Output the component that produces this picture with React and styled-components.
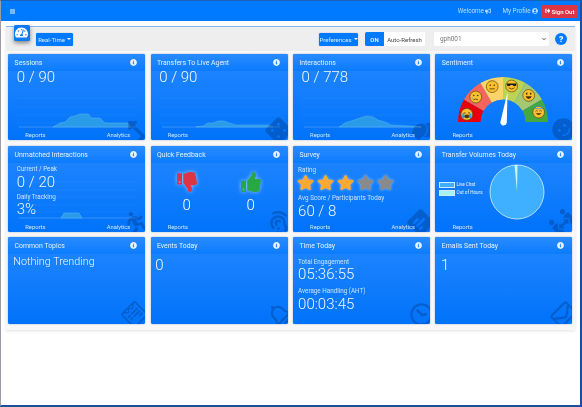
import React from 'react';
import styled, { createGlobalStyle } from 'styled-components';
import {
  FaBullhorn, FaUserCircle, FaSignOutAlt, FaTachometerAlt, FaInfoCircle, FaQuestion,
  FaThumbsDown, FaThumbsUp, FaStar, FaLevelUpAlt, FaDiceFour, FaComments, FaSmile, FaRunning,
  FaAssistiveListeningSystems, FaPollH, FaPeopleArrows, FaWpforms, FaRegBell, FaRegClock, FaRegEnvelope, FaChevronDown,
} from 'react-icons/fa';

const Global = createGlobalStyle`
  html, body { margin: 0; padding: 0; background: #fff; }
  body { font-family: Roboto, "Liberation Sans", sans-serif; }
  * { box-sizing: border-box; }
`;

const Frame = styled.div`
  width: 582px; height: 407px; overflow: hidden; background: #fff; filter: blur(.3px);
  border-top: 1px solid #1c5fb8; border-left: 1px solid #9c9ca4;
  border-right: 2px solid #1b4f9c; border-bottom: 2px solid #1b4f9c;
`;
const Nav = styled.div`
  height: 20px; background: #007bff; display: flex; align-items: center;
  padding: 0 2px 0 8.5px; color: rgba(255,255,255,.72); font-size: 6.3px;
`;
const MenuDot = styled.i`display: block; width: 5px; height: 5px; background: #7ab8ff;`;
const NavSpacer = styled.div`flex: 1;`;
const NavItem = styled.span`
  display: flex; align-items: center; gap: 1.5px; margin-right: ${p => p.$mr}px; white-space: nowrap;
  svg { width: 6px; height: 6px; }
`;
const SignOut = styled.button`
  width: 37px; height: 13px; padding: 0; border: 0; border-radius: 1.5px; background: #dc3545; color: #fff;
  font: 500 6px Roboto, sans-serif; display: flex; align-items: center; justify-content: center; gap: 1.5px;
  svg { width: 5.5px; height: 5.5px; }
`;
const Panel = styled.div`
  position: relative; width: 569px; height: 304px; margin: 5px 0 0 5px; background: #f8f8f8;
  border-top: 1px solid #7fb9f0; box-shadow: 0 1px 3px rgba(0,0,0,.12);
`;
const Toolbar = styled.div`
  height: 24px; background: #eeeeee; display: flex; align-items: center; padding: 0 8px 0 30px;
`;
const Logo = styled.div`
  position: absolute; left: 7.5px; top: -2px; width: 16.5px; height: 15.5px; background: #0b7bf5; border-radius: 1.5px;
  box-shadow: 0 2px 4px rgba(0,0,0,.45); display: flex; align-items: center; justify-content: center; color: #fff;
  svg { width: 13px; height: 13px; }
`;
const Drop = styled.button`
  height: 13px; width: ${p => p.$w}px; padding: 0; border: 0; border-radius: 1.5px; background: #007bff;
  color: rgba(255,255,255,.85); font: 400 6px Roboto, sans-serif; margin-right: ${p => p.$mr || 0}px;
  display: flex; align-items: center; justify-content: center; gap: 2px; box-shadow: 0 0 1px rgba(0,60,160,.6);
  &::after { content: ''; border-top: 2px solid #fff; border-left: 2px solid transparent; border-right: 2px solid transparent; }
`;
const Grow = styled.div`flex: 1;`;
const Toggle = styled.div`
  display: flex; height: 14px; width: 60px; background: #fff; margin-right: 9px; font-size: 6px;
`;
const ToggleOn = styled.span`
  width: 19px; background: #007bff; color: #fff; font-weight: 500; display: flex; align-items: center; justify-content: center; border-radius: 1.5px 0 0 1.5px;
`;
const ToggleOff = styled.span`
  flex: 1; color: #444; display: flex; align-items: center; justify-content: center;
`;
const Select = styled.div`
  width: 115px; height: 14px; background: #fff; border-radius: 2px; color: #777; font-size: 6.4px;
  display: flex; align-items: center; justify-content: space-between; padding: 0 3px 0 6px; margin-right: 6px;
  svg { width: 4px; height: 4px; color: #444; }
`;
const Help = styled.div`
  width: 12px; height: 12px; border-radius: 50%; background: #007bff; color: #fff; display: flex; align-items: center; justify-content: center;
  svg { width: 6px; height: 6px; }
`;
const Grid = styled.div`
  display: grid; grid-template-columns: repeat(4, 137px); grid-auto-rows: 86.3px; gap: 5.6px 5.4px;
  margin: 2.7px 0 0 2.3px;
`;
const CardBox = styled.div`
  position: relative; overflow: hidden; border-radius: 1.5px; color: #fff; display: flex; flex-direction: column;
  background: linear-gradient(#2487ff, #0073fa); box-shadow: 0 0 1.5px rgba(0,60,140,.5);
`;
const Head = styled.div`
  height: 17px; flex: none; display: flex; align-items: center; justify-content: space-between; padding: 1px 8px 0 6.3px;
  background: linear-gradient(#2a8bff, #0b7cff); font-size: 6.9px; color: rgba(255,255,255,.88);
  svg { width: 7px; height: 7px; color: #e8f2ff; margin-top: -1px; }
`;
const Body = styled.div`
  flex: 1; min-height: 0; position: relative; display: flex; flex-direction: column; padding: 0 0 0 ${p => p.$pl ?? 8.5}px;
`;
const Big = styled.div`
  font-size: ${p => p.$size || 15}px; font-weight: 300; line-height: ${p => p.$lh || 14}px; margin-top: ${p => p.$mt ?? -1}px;
  margin-left: ${p => p.$ml || 0}px; white-space: nowrap; color: rgba(255,255,255,.94);
`;
const Label = styled.div`
  font-size: 6.3px; line-height: 8px; margin-top: ${p => p.$mt ?? 0}px; color: rgba(255,255,255,.78); white-space: nowrap;
`;
const Chart = styled.svg`
  position: absolute; left: 0; top: ${p => p.$top}px; width: 137px; height: ${p => p.$h}px; display: block;
`;
const Footer = styled.div`
  position: absolute; left: 0; right: 0; bottom: 0; height: 9px; display: flex; align-items: center; justify-content: space-between;
  padding: 0 15px 0 17px; font-size: 5.8px; color: rgba(255,255,255,.82); z-index: 2;
`;
const Mark = styled.div`
  position: absolute; right: ${p => p.$r ?? -2}px; bottom: ${p => p.$b ?? -2}px; color: rgba(0,45,110,.32);
  transform: rotate(-45deg); line-height: 0;
  svg { width: 23px; height: 23px; }
`;
const Thumbs = styled.div`
  display: grid; grid-template-columns: 64px 64px; margin: 9.5px 0 0 -4.5px; justify-items: center;
`;
const ThumbCell = styled.div`
  display: flex; flex-direction: column; align-items: center; gap: 5px; font-size: 15px; font-weight: 300; line-height: 17px;
  svg { width: 20px; height: 20px; color: ${p => p.$c}; filter: drop-shadow(0 0 2px rgba(255,255,255,.55)); }
`;
const Stars = styled.div`
  display: flex; gap: 2.8px; margin: 0 0 3px -1.5px;
`;
const Star = styled.span`
  line-height: 0; color: ${p => (p.$on ? '#ffa930' : '#8a8a8a')};
  svg { width: 17.2px; height: 17.2px; filter: drop-shadow(0 0 1.5px rgba(255,255,255,.5)); }
`;
const Legend = styled.div`
  display: flex; flex-direction: column; gap: 2px; margin-top: 19px; font-size: 4.6px; color: rgba(255,255,255,.9);
`;
const LegendRow = styled.div`display: flex; align-items: center; gap: 1.5px; height: 6px;`;
const Swatch = styled.i`
  display: block; width: 16px; height: 6px; background: ${p => p.$c}; border: .6px solid #cfeaff;
`;
const VolRow = styled.div`display: flex; padding-left: 3.5px;`;
const Pie = styled.svg`width: 56px; height: 56px; margin: 1.5px 0 0 6.5px; display: block;`;
const Gauge = styled.svg`
  position: absolute; left: 20px; top: 4px; width: 96px; height: 52px; display: block;
`;

function Grids({ lines, w = 120 }) {
  return lines.map(y => <line key={y} x1="9" x2={9 + w} y1={y} y2={y} stroke="rgba(255,255,255,.09)" strokeWidth=".6" />);
}
function Spark({ top, h, base, pts, lines }) {
  const d = `M${pts.map(p => p.join(' ')).join('L')}`;
  return (
    <Chart $top={top} $h={h} viewBox={`0 0 137 ${h}`}>
      <Grids lines={lines} />
      <line x1="11" x2="129" y1={base} y2={base} stroke="rgba(190,225,255,.55)" strokeWidth=".5" />
      <path d={`${d}Z`} fill="#2a9be8" stroke="#6cc0f5" strokeWidth=".4" />
    </Chart>
  );
}

function Face({ x, y, kind }) {
  const ink = '#4a3410';
  return (
    <g transform={`translate(${x} ${y})`}>
      <circle r="5.9" fill="#fbc02d" stroke="#5c4a14" strokeWidth=".7" />
      {kind === 'cry' && <>
        <path d="M-3.2-1.4h2M1.2-1.4h2" stroke={ink} strokeWidth=".8" />
        <ellipse cy="2" rx="2.5" ry="1.9" fill={ink} />
        <path d="M-4.6-.8h2.2v4.6h-2.2zM2.4-.8h2.2v4.6h-2.2z" fill="#2f9be8" />
      </>}
      {kind === 'sad' && <>
        <circle cx="-2" cy="-1.5" r=".8" fill={ink} /><circle cx="2" cy="-1.5" r=".8" fill={ink} />
        <path d="M-2.4 3Q0 .9 2.4 3" stroke={ink} strokeWidth=".8" fill="none" />
        <path d="M-3.6 0q-1 1.8 0 2.4q1-.6 0-2.4z" fill="#2f9be8" />
      </>}
      {kind === 'flat' && <>
        <circle cx="-2" cy="-1.4" r=".8" fill={ink} /><circle cx="2" cy="-1.4" r=".8" fill={ink} />
        <path d="M-2.6 2.2h5.2" stroke={ink} strokeWidth=".8" />
      </>}
      {kind === 'cool' && <>
        <path d="M-5-2.4H5L4.4-.2q-2.4 1-3.6-.7h-1.6q-1.2 1.7-3.6.7z" fill="#1c1c1c" />
        <path d="M-2.8 1.8Q0 4.3 2.8 1.8" stroke={ink} strokeWidth=".8" fill="none" />
      </>}
      {kind === 'grin' && <>
        <ellipse cx="-2" cy="-1.7" rx=".8" ry="1.1" fill={ink} /><ellipse cx="2" cy="-1.7" rx=".8" ry="1.1" fill={ink} />
        <path d="M-3 .9H3Q2.4 3.7 0 3.7T-3 .9z" fill={ink} />
      </>}
      {kind === 'halo' && <>
        <ellipse cy="-4.7" rx="4.4" ry="1.3" fill="none" stroke="#2f9be8" strokeWidth=".8" />
        <path d="M-3.2-.9q1.2-1.2 2.4 0M.8-.9q1.2-1.2 2.4 0" stroke={ink} strokeWidth=".7" fill="none" />
        <path d="M-3 1.2Q0 4.6 3 1.2z" fill={ink} />
      </>}
    </g>
  );
}

function SentimentGauge() {
  const cx = 48, cy = 47, R = 45, r = 22.5;
  const colors = ['#e8000d', '#f4665c', '#fcd467', '#bdd452', '#a6c872', '#44a83e'];
  const kinds = ['cry', 'sad', 'flat', 'cool', 'grin', 'halo'];
  const pt = (rad, deg) => {
    const a = (deg * Math.PI) / 180;
    return [cx + rad * Math.cos(a), cy - rad * Math.sin(a)];
  };
  return (
    <Gauge viewBox="0 0 96 52">
      {colors.map((c, i) => {
        const a0 = 180 - i * 30, a1 = a0 - 30;
        const [x0, y0] = pt(R, a0), [x1, y1] = pt(R, a1), [x2, y2] = pt(r, a1), [x3, y3] = pt(r, a0);
        return <path key={c} d={`M${x0} ${y0}A${R} ${R} 0 0 1 ${x1} ${y1}L${x2} ${y2}A${r} ${r} 0 0 0 ${x3} ${y3}Z`} fill={c} />;
      })}
      {kinds.map((k, i) => {
        const [x, y] = pt(37, 168 - i * 30.5);
        return <Face key={k} x={x} y={y} kind={k} />;
      })}
      <path d="M45.3 47.5L52.5 17L51.8 47.8A3.3 3.3 0 0 1 45.3 47.5Z" fill="#fff" />
    </Gauge>
  );
}

function Card({ title, mark, markR, markB, reports, analytics, pl, children }) {
  const Ico = mark;
  return (
    <CardBox>
      <Head>{title}<FaInfoCircle /></Head>
      <Body $pl={pl}>
        {children}
        {(reports || analytics) && (
          <Footer>{reports ? <span>Reports</span> : <span />}{analytics ? <span>Analytics</span> : <span />}</Footer>
        )}
      </Body>
      <Mark $r={markR} $b={markB}><Ico /></Mark>
    </CardBox>
  );
}

const L = [14, 23, 31, 39, 47];
export default function App() {
  return (
    <Frame>
      <Global />
      <Nav>
        <MenuDot />
        <NavSpacer />
        <NavItem $mr={11}>Welcome <FaBullhorn /></NavItem>
        <NavItem $mr={3}>My Profile <FaUserCircle /></NavItem>
        <SignOut><FaSignOutAlt />Sign Out</SignOut>
      </Nav>
      <Panel>
        <Toolbar>
          <Logo><FaTachometerAlt /></Logo>
          <Drop $w={37}>Real-Time</Drop>
          <Grow />
          <Drop $w={39} $mr={7}>Preferences</Drop>
          <Toggle><ToggleOn>ON</ToggleOn><ToggleOff>Auto-Refresh</ToggleOff></Toggle>
          <Select>gph001<FaChevronDown /></Select>
          <Help><FaQuestion /></Help>
        </Toolbar>
        <Grid>
          <Card title="Sessions" mark={FaLevelUpAlt} reports analytics>
            <Big>0 / 90</Big>
            <Spark top={13} h={46} base={43} lines={L} pts={[[45, 43], [52, 39], [57, 38], [62, 33], [67, 32], [72, 30], [80, 30], [84, 34], [92, 34], [97, 39], [120, 39], [122, 43]]} />
          </Card>
          <Card title="Transfers To Live Agent" mark={FaDiceFour} reports>
            <Big>0 / 90</Big>
            <Spark top={13} h={46} base={43} lines={L} pts={[[45, 43], [52, 42], [57, 39], [62, 39], [67, 37], [73, 37], [78, 39], [85, 41], [118, 41], [122, 43]]} />
          </Card>
          <Card title="Interactions" mark={FaComments} markR={-5} reports analytics>
            <Big>0 / 778</Big>
            <Spark top={13} h={46} base={43} lines={L} pts={[[46, 43], [52, 39], [58, 37], [64, 35], [70, 33], [74, 32], [80, 33], [85, 36], [92, 38], [98, 41], [118, 42], [128, 43]]} />
          </Card>
          <Card title="Sentiment" mark={FaSmile} markR={-3} markB={-1} reports>
            <SentimentGauge />
          </Card>

          <Card title="Unmatched Interactions" mark={FaRunning} reports analytics>
            <Label $mt={2}>Current / Peak</Label>
            <Big $mt={1} $lh={16}>0 / 20</Big>
            <Label $mt={3.5}>Daily Tracking</Label>
            <Big $mt={0} $lh={16}>3%</Big>
            <Spark top={16} h={46} base={39} lines={[3, 11, 18, 26, 33]} pts={[[53, 39], [56, 34], [71, 34], [74, 39]]} />
          </Card>
          <Card title="Quick Feedback" mark={FaAssistiveListeningSystems} reports>
            <Thumbs>
              <ThumbCell $c="#dc3545"><FaThumbsDown />0</ThumbCell>
              <ThumbCell $c="#28a745"><FaThumbsUp />0</ThumbCell>
            </Thumbs>
          </Card>
          <Card title="Survey" mark={FaPollH} pl={5} reports analytics>
            <Label $mt={3}>Rating</Label>
            <Stars>{[1, 1, 1, 0, 0].map((on, i) => <Star key={i} $on={on}><FaStar /></Star>)}</Stars>
            <Label>Avg Score / Participants Today</Label>
            <Big $mt={1.5} $lh={16}>60 / 8</Big>
          </Card>
          <Card title="Transfer Volumes Today" mark={FaPeopleArrows} pl={0} reports>
            <VolRow>
              <Legend>
                <LegendRow><Swatch $c="#3fb0ff" />Live Chat</LegendRow>
                <LegendRow><Swatch $c="#a5f3ee" />Out of Hours</LegendRow>
              </Legend>
              <Pie viewBox="0 0 56 56">
                <circle cx="28" cy="28" r="27" fill="#3fb0ff" stroke="#d8f0ff" strokeWidth=".8" />
                <path d="M28 28L25.5 1.1A27 27 0 0 1 28.5 1Z" fill="#c8f7f2" />
              </Pie>
            </VolRow>
          </Card>

          <Card title="Common Topics" mark={FaWpforms} markR={-1} pl={5}>
            <Big $size={10.8} $mt={1} $lh={13}>Nothing Trending</Big>
          </Card>
          <Card title="Events Today" mark={FaRegBell} markR={-3}>
            <Big $mt={3.5} $lh={15} $ml={-4}>0</Big>
          </Card>
          <Card title="Time Today" mark={FaRegClock} markR={-3} pl={5}>
            <Label $mt={3.5}>Total Engagement</Label>
            <Big $mt={0.5} $lh={16}>05:36:55</Big>
            <Label $mt={5}>Average Handling (AHT)</Label>
            <Big $mt={0.5} $lh={16}>00:03:45</Big>
          </Card>
          <Card title="Emails Sent Today" mark={FaRegEnvelope} markR={-3}>
            <Big $mt={3.5} $lh={15} $ml={-3}>1</Big>
          </Card>
        </Grid>
      </Panel>
    </Frame>
  );
}
